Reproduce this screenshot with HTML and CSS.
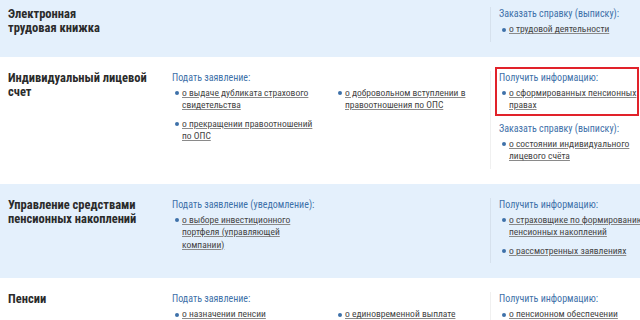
FILE: index.html
```html
<!DOCTYPE html>
<html lang="ru">
<head>
<meta charset="utf-8">
<title>Услуги</title>
<link rel="stylesheet" href="styles.css">
</head>
<body>
<div class="page">
  <section class="row alt">
    <h3 class="title">Электронная<br>трудовая книжка</h3>
    <div class="actions"></div>
    <div class="info">
      <div class="group">
        <div class="head">Заказать справку (выписку):</div>
        <ul class="list">
          <li><a href="#">о трудовой деятельности</a></li>
        </ul>
      </div>
    </div>
  </section>

  <section class="row">
    <h3 class="title">Индивидуальный лицевой счет</h3>
    <div class="actions">
      <div class="head">Подать заявление:</div>
      <div class="cols">
        <ul class="list">
          <li><a href="#">о выдаче дубликата страхового свидетельства</a></li>
          <li><a href="#">о прекращении правоотношений по ОПС</a></li>
        </ul>
        <ul class="list">
          <li><a href="#">о добровольном вступлении в правоотношения по ОПС</a></li>
        </ul>
      </div>
    </div>
    <div class="info">
      <div class="group marked">
        <div class="head">Получить информацию:</div>
        <ul class="list">
          <li><a href="#">о сформированных пенсионных правах</a></li>
        </ul>
      </div>
      <div class="group">
        <div class="head">Заказать справку (выписку):</div>
        <ul class="list">
          <li><a href="#">о состоянии индивидуального лицевого счёта</a></li>
        </ul>
      </div>
    </div>
  </section>

  <section class="row alt">
    <h3 class="title">Управление средствами пенсионных накоплений</h3>
    <div class="actions">
      <div class="head">Подать заявление (уведомление):</div>
      <div class="cols">
        <ul class="list">
          <li><a href="#">о выборе инвестиционного портфеля (управляющей компании)</a></li>
        </ul>
        <ul class="list"></ul>
      </div>
    </div>
    <div class="info">
      <div class="group">
        <div class="head">Получить информацию:</div>
        <ul class="list">
          <li><a href="#">о страховщике по формированию пенсионных накоплений</a></li>
          <li><a href="#">о рассмотренных заявлениях</a></li>
        </ul>
      </div>
    </div>
  </section>

  <section class="row">
    <h3 class="title">Пенсии</h3>
    <div class="actions">
      <div class="head">Подать заявление:</div>
      <div class="cols">
        <ul class="list">
          <li><a href="#">о назначении пенсии</a></li>
        </ul>
        <ul class="list">
          <li><a href="#">о единовременной выплате</a></li>
        </ul>
      </div>
    </div>
    <div class="info">
      <div class="group">
        <div class="head">Получить информацию:</div>
        <ul class="list">
          <li><a href="#">о пенсионном обеспечении</a></li>
        </ul>
      </div>
    </div>
  </section>
</div>
</body>
</html>
```

FILE: styles.css
```css
html, body {
  margin: 0;
  padding: 0;
  background: #ffffff;
  overflow: hidden;
}

body {
  font-family: Roboto, "Liberation Sans", sans-serif;
  font-stretch: 75%;
  color: #333333;
}

.page {
  width: 664px;
  margin-top: -7px;
}

.row {
  display: grid;
  grid-template-columns: 164px 318px 1fr;
  padding: 14px 0 21px 8px;
}

.row.alt {
  background: #e4f0fc;
}

.title {
  margin: 0;
  font-size: 12.5px;
  font-stretch: 80%;
  line-height: 14px;
  font-weight: 700;
  color: #2b2b2b;
  padding-right: 10px;
}

.head {
  font-size: 10px;
  line-height: 14px;
  color: #3e71a9;
  margin-bottom: 2px;
  white-space: nowrap;
}

.cols {
  display: grid;
  grid-template-columns: 163px 1fr;
}

.list {
  list-style: none;
  margin: 0;
  padding: 0;
}

.list li {
  position: relative;
  padding-left: 10px;
  margin-bottom: 6px;
  font-size: 9.5px;
  line-height: 12.5px;
}

.list li::before {
  content: "";
  position: absolute;
  left: 3px;
  top: 4.5px;
  width: 4px;
  height: 4px;
  border-radius: 50%;
  background: #3e71a9;
}

.list a {
  color: #444444;
  text-decoration: underline;
  text-decoration-color: #8a8a8a;
  text-underline-offset: 1px;
}

.cols .list li {
  padding-right: 18px;
}

.info {
  border-left: 1px solid rgba(0, 0, 0, 0.06);
  padding-left: 8px;
  margin-bottom: -6px;
}

.group + .group {
  margin-top: 6px;
}

.info .list li {
  padding-right: 4px;
}

.group.marked {
  width: 138px;
  margin: -4px 0 0 -4px;
  padding: 2px 0 2px 2px;
  border: 2px solid #e1222a;
}

.group.marked .list li {
  padding-right: 0;
}

.group.marked .list li:last-child {
  margin-bottom: 0;
}
```
